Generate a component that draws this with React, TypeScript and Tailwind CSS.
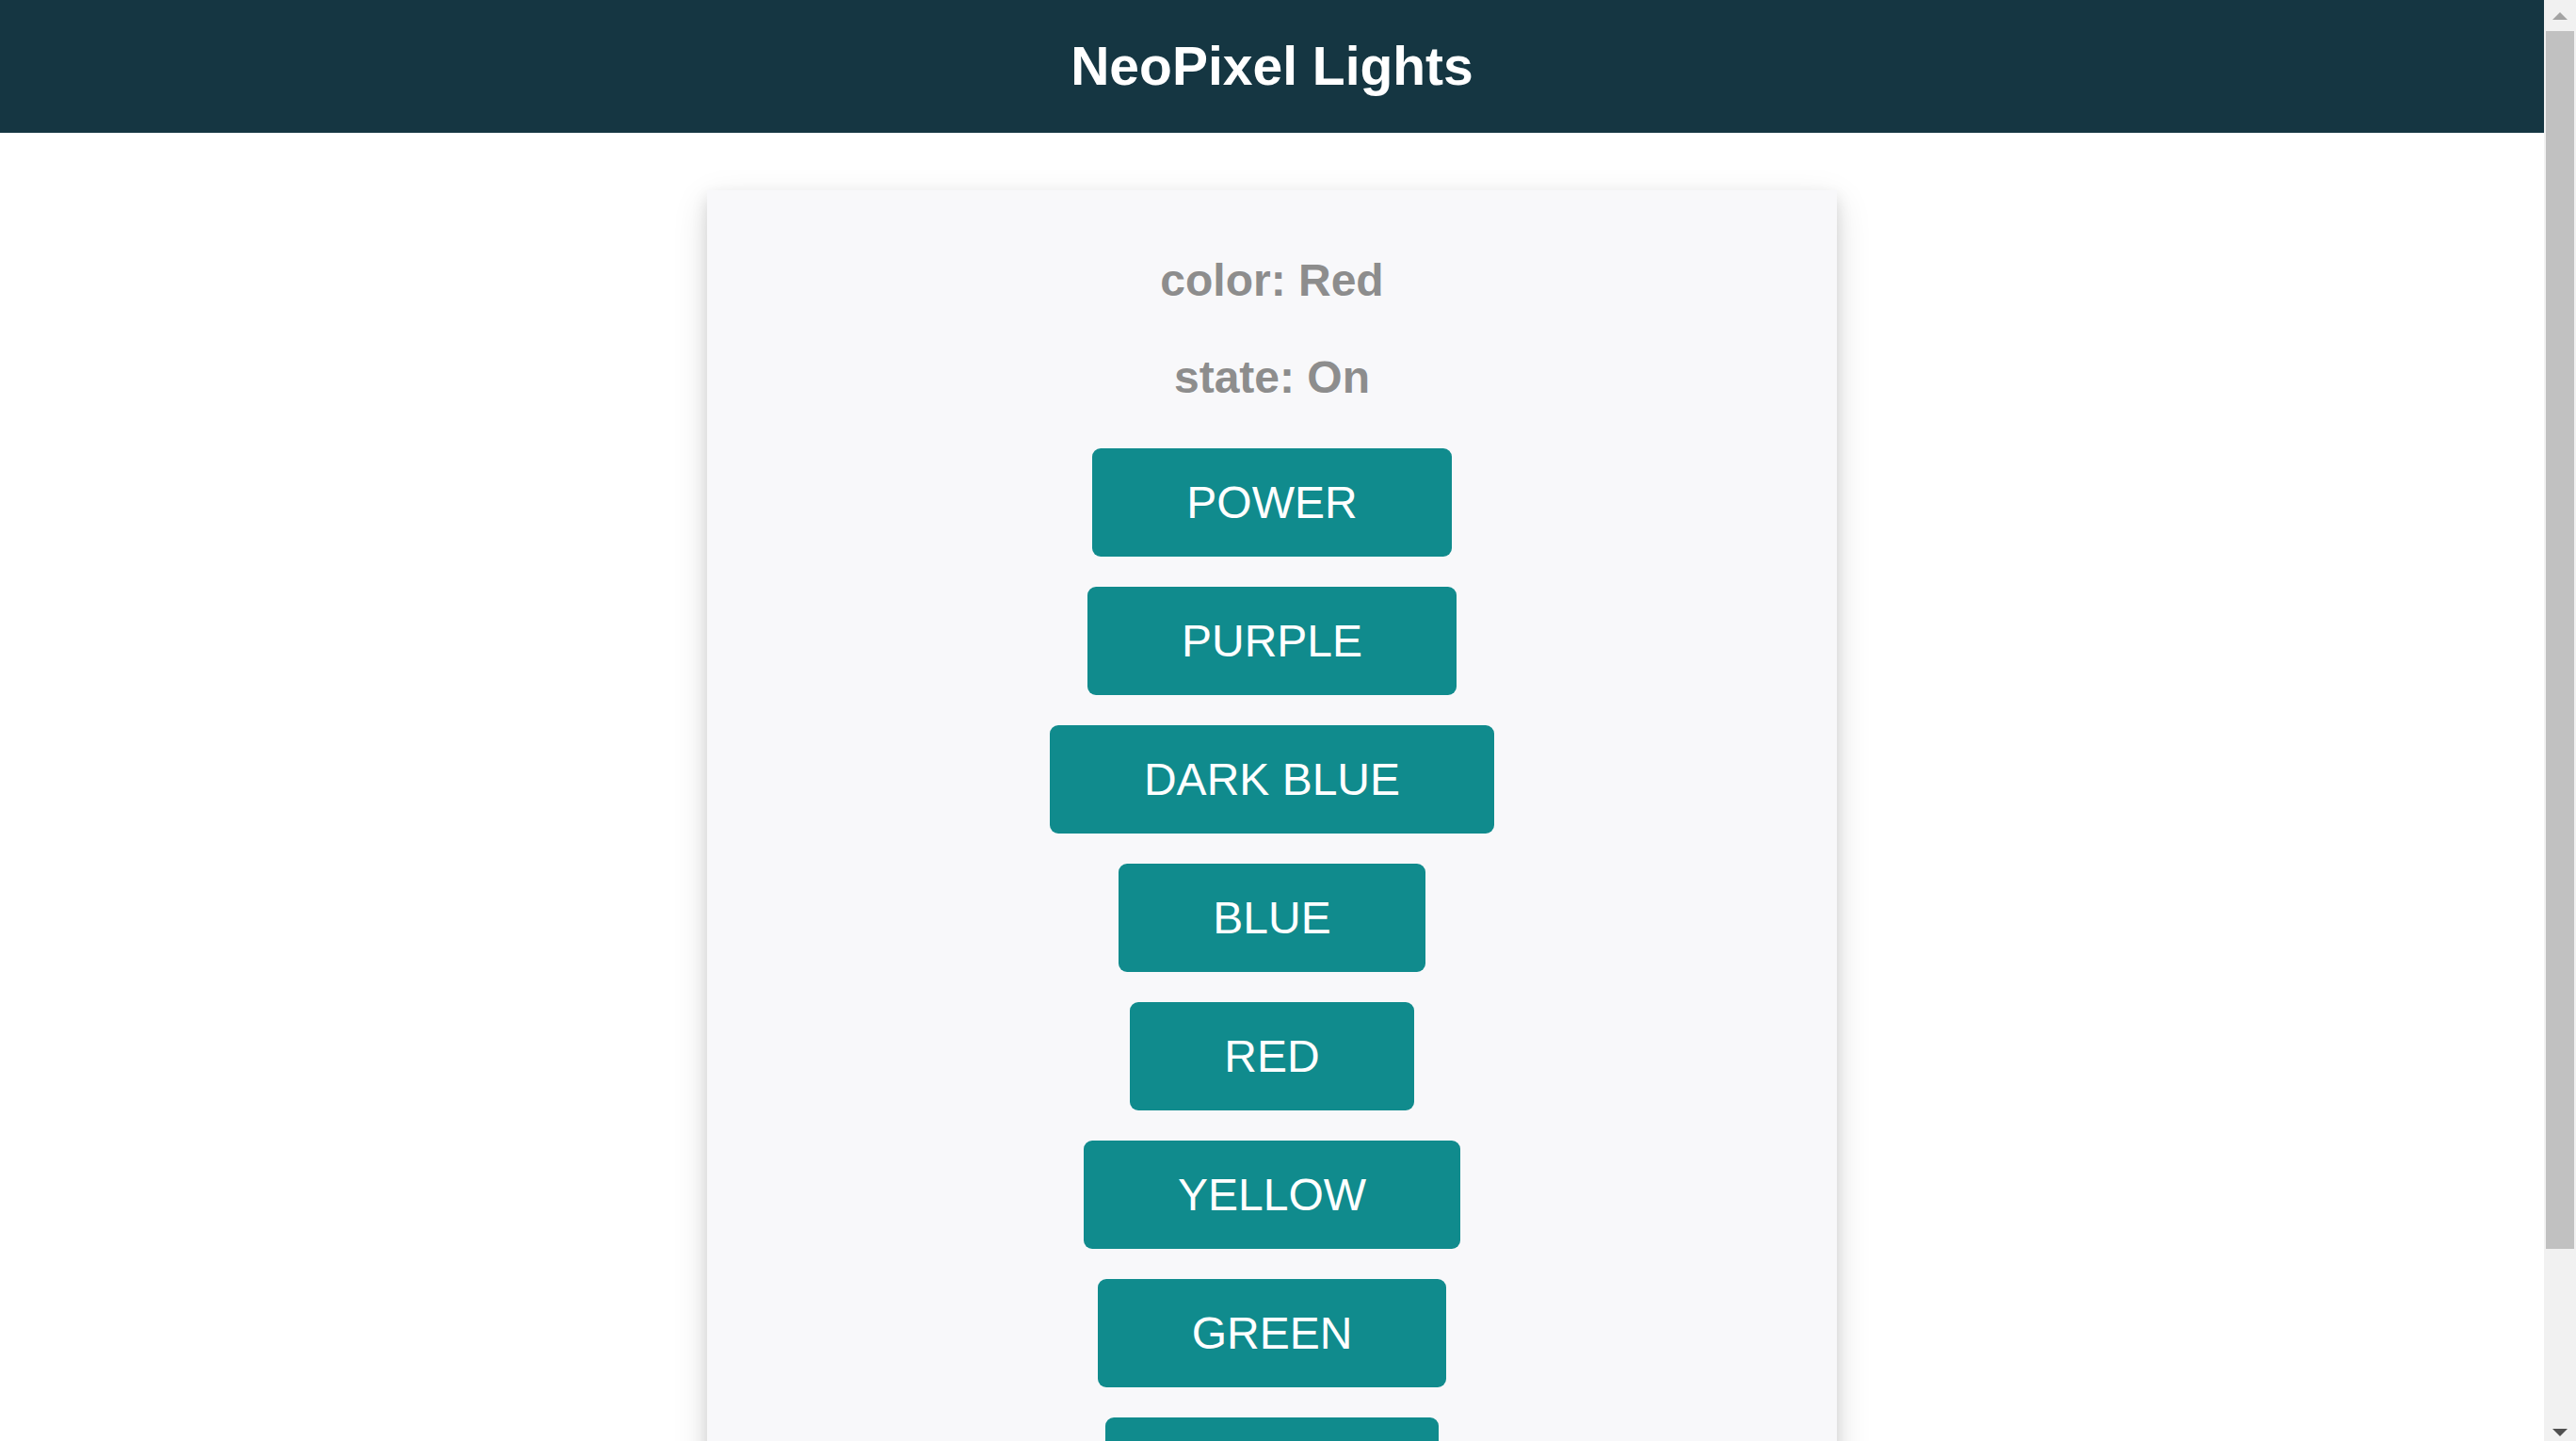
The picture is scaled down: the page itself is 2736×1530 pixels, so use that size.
import React from "react";

const COLORS = ["POWER", "PURPLE", "DARK BLUE", "BLUE", "RED", "YELLOW", "GREEN", "WHITE"];

function StatusLine({ label, value }: { label: string; value: string }) {
  return (
    <p className="text-[48px] font-bold leading-[55px] text-[#8d8d8d]">
      {label}: {value}
    </p>
  );
}

function LightButton({ name }: { name: string }) {
  return (
    <button className="rounded-[9px] bg-[#108b8d] px-[100px] py-[30px] text-[48px] leading-[55px] text-white">
      {name}
    </button>
  );
}

function FakeScrollbar() {
  return (
    <div className="flex h-full w-[34px] shrink-0 flex-col bg-[#f1f1f1]">
      <div className="flex h-[33px] items-start justify-center pt-[13px]">
        <div className="h-0 w-0 border-x-[8px] border-b-[8px] border-x-transparent border-b-[#a3a3a3]" />
      </div>
      <div className="mx-[2px] h-[1293px] bg-[#c1c1c1]" />
      <div className="flex flex-1 items-end justify-center pb-[5px]">
        <div className="h-0 w-0 border-x-[8px] border-t-[8px] border-x-transparent border-t-[#505050]" />
      </div>
    </div>
  );
}

export default function App() {
  return (
    <div className="flex h-screen w-full overflow-hidden bg-white font-['Liberation_Sans',Arial,sans-serif]">
      <div className="min-w-0 flex-1 overflow-hidden">
        <header className="flex h-[141px] items-center justify-center bg-[#153642]">
          <h1 className="text-[57px] font-bold leading-[1.15] text-white">NeoPixel Lights</h1>
        </header>
        <main className="mt-[61px] flex justify-center">
          <div className="flex w-[1200px] flex-col items-center bg-[#f8f8fa] pt-[68px] pb-[120px] shadow-[0_8px_16px_0_rgba(0,0,0,0.12),0_12px_36px_0_rgba(0,0,0,0.12)]">
            <StatusLine label="color" value="Red" />
            <div className="mt-[48px]">
              <StatusLine label="state" value="On" />
            </div>
            <div className="mt-[48px] flex flex-col items-center gap-[32px]">
              {COLORS.map((c) => (
                <LightButton key={c} name={c} />
              ))}
            </div>
          </div>
        </main>
      </div>
      <FakeScrollbar />
    </div>
  );
}
